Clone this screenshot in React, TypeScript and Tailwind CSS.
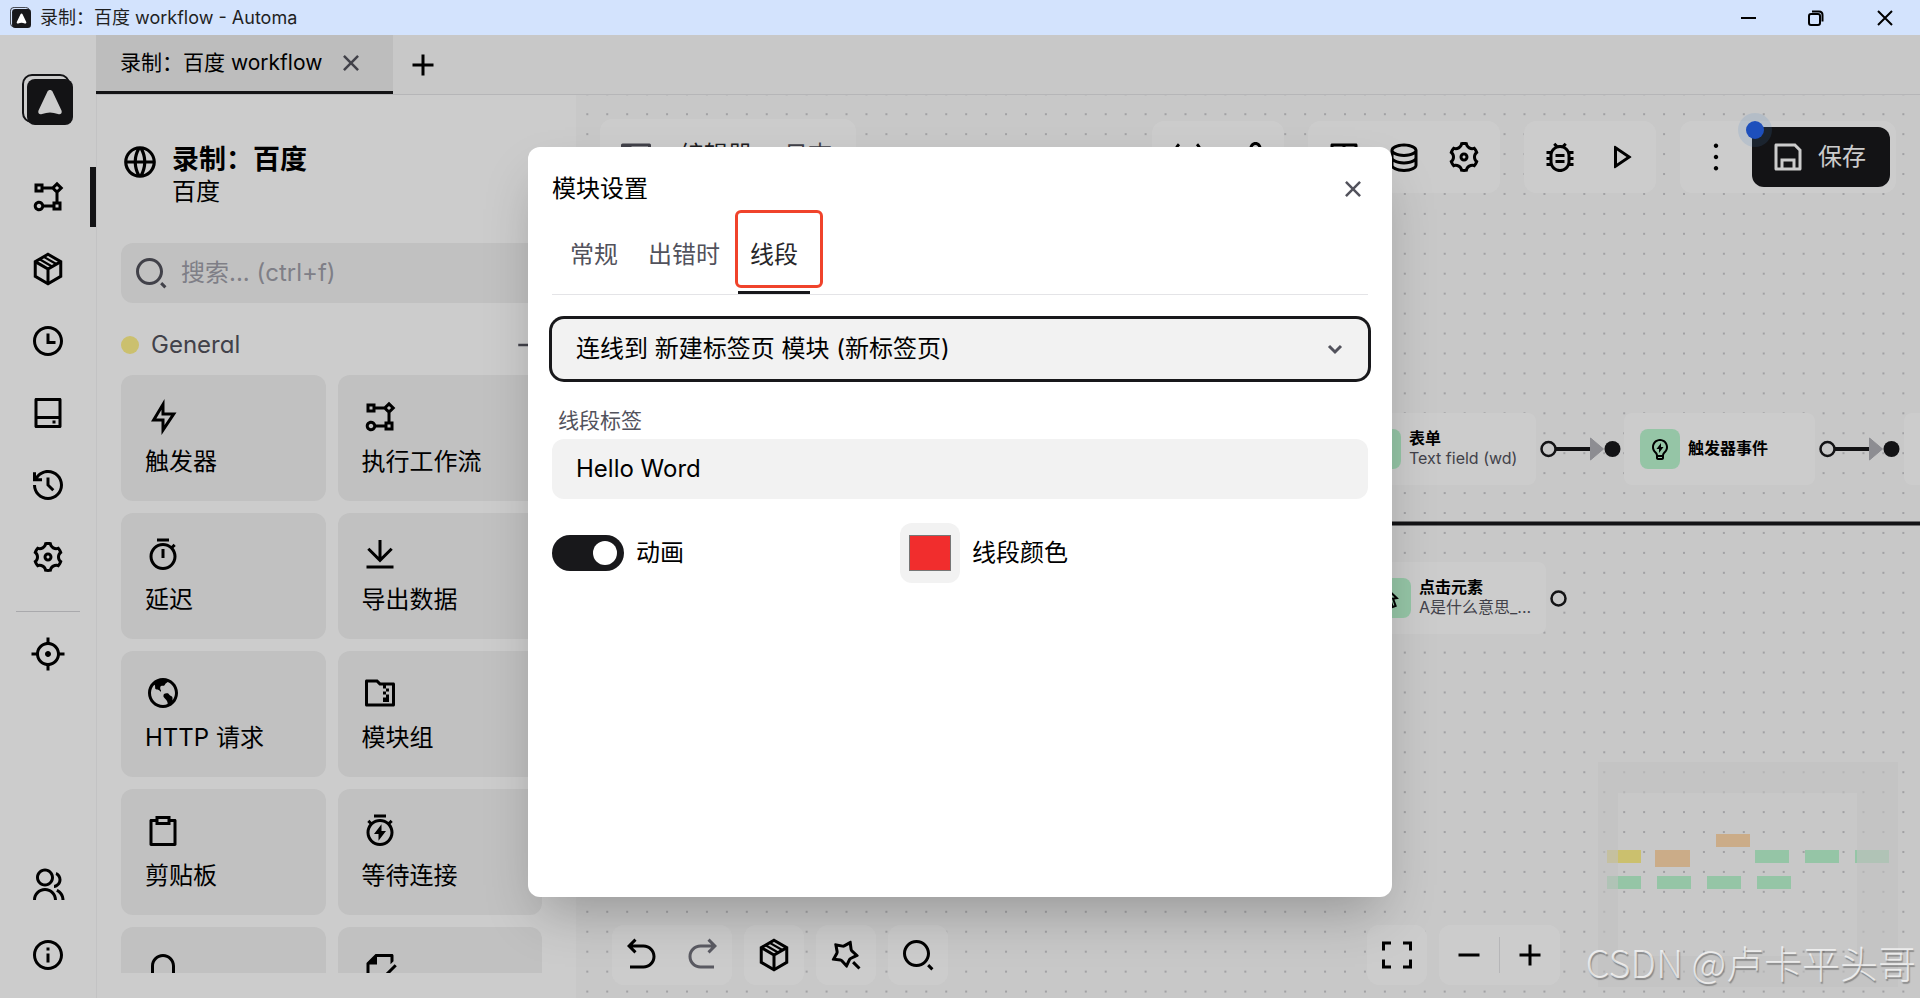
import React, { useState } from "react";
import {
  RiAddLine,
  RiArrowGoBackLine,
  RiArrowGoForwardLine,
  RiBaseStationLine,
  RiBug2Line,
  RiClipboardLine,
  RiCloseLine,
  RiCursorLine,
  RiDatabase2Line,
  RiDownloadLine,
  RiEarthLine,
  RiFileEditLine,
  RiFlashlightLine,
  RiFlowChart,
  RiFocus3Line,
  RiFolderZipLine,
  RiFullscreenLine,
  RiGlobalLine,
  RiGroupLine,
  RiHardDrive2Line,
  RiHistoryLine,
  RiInformationLine,
  RiLightbulbFlashLine,
  RiMagicLine,
  RiMore2Line,
  RiNotification3Line,
  RiPlayLine,
  RiSaveLine,
  RiSearch2Line,
  RiSettings3Line,
  RiShareLine,
  RiSubtractLine,
  RiTable2,
  RiTimeLine,
  RiTimerFlashLine,
  RiTimerLine,
} from "react-icons/ri";

type Icon = React.ComponentType<{ size?: number; className?: string }>;

interface NavItem {
  label: string;
  icon: Icon;
}

const PackageIcon: Icon = ({ size = 36 }) => (
  <svg width={size} height={size} viewBox="0 0 24 24" fill="none" stroke="currentColor" aria-hidden="true">
    <path d="M12 2.200l8.500 4.900v9.800L12 21.800l-8.500-4.900V7.100z" strokeWidth="2" />
    <path d="M3.500 7.100L12 12l8.500-4.900M12 12v9.500" strokeWidth="2" />
    <path d="M6.400 5.500l8.300 4.800M9.200 3.900l8.300 4.800" strokeWidth="1.500" />
  </svg>
);

const navItems: NavItem[] = [
  { label: "工作流", icon: RiFlowChart },
  { label: "模块包", icon: PackageIcon },
  { label: "定时", icon: RiTimeLine },
  { label: "存储", icon: RiHardDrive2Line },
  { label: "日志", icon: RiHistoryLine },
  { label: "设置", icon: RiSettings3Line },
];

const blocks: { label?: string; icon: Icon }[] = [
  { label: "触发器", icon: RiFlashlightLine },
  { label: "执行工作流", icon: RiFlowChart },
  { label: "延迟", icon: RiTimerLine },
  { label: "导出数据", icon: RiDownloadLine },
  { label: "HTTP 请求", icon: RiEarthLine },
  { label: "模块组", icon: RiFolderZipLine },
  { label: "剪贴板", icon: RiClipboardLine },
  { label: "等待连接", icon: RiTimerFlashLine },
  { icon: RiNotification3Line },
  { icon: RiFileEditLine },
];

const miniNodes = [
  { x: 9, y: 88, w: 34, h: 13, fill: "#fef08a" },
  { x: 57, y: 88, w: 35, h: 17, fill: "#fed7aa" },
  { x: 118, y: 72, w: 34, h: 13, fill: "#fed7aa" },
  { x: 157, y: 88, w: 34, h: 13, fill: "#bbf7d0" },
  { x: 207, y: 88, w: 34, h: 13, fill: "#bbf7d0" },
  { x: 257, y: 88, w: 34, h: 13, fill: "#bbf7d0" },
  { x: 9, y: 114, w: 34, h: 13, fill: "#bbf7d0" },
  { x: 59, y: 114, w: 34, h: 13, fill: "#bbf7d0" },
  { x: 109, y: 114, w: 34, h: 13, fill: "#bbf7d0" },
  { x: 159, y: 114, w: 34, h: 13, fill: "#bbf7d0" },
];

const Logo: React.FC<{ className?: string }> = ({ className }) => (
  <svg viewBox="0 0 51 51" className={className} aria-hidden="true">
    <rect x="1" y="1" width="46" height="47" rx="9" fill="none" stroke="#18181b" strokeWidth="2" />
    <rect x="5" y="5" width="46" height="46" rx="8" fill="#18181b" />
    <path
      d="M25.500 17.500c1-2 4-2 5 0l9 19c1 2.500-1 4.500-3.500 3.500-5.500-2-10.500-2-16 0-2.500 1-4.500-1-3.500-3.500z"
      fill="#fff"
    />
  </svg>
);

const TitleBar: React.FC = () => (
  <header className="flex h-[35px] shrink-0 items-center bg-[#d3e3fd] pl-[10px] text-[18px] text-[#1f1f1f] [font-feature-settings:normal]">
    <Logo className="mr-[9px] size-[21px]" />
    <span className="leading-6">录制：百度 workflow - Automa</span>
    <div className="ml-auto flex h-full">
      <button aria-label="最小化" className="flex w-[68px] items-center justify-center">
        <svg width="16" height="16" fill="none" stroke="#000" strokeWidth="2">
          <path d="M1 8h15" />
        </svg>
      </button>
      <button aria-label="还原" className="flex w-[68px] items-center justify-center">
        <svg width="16" height="16" fill="none" stroke="#000" strokeWidth="2">
          <rect x="1" y="4" width="11" height="11" rx="2" />
          <path d="M4 1.500h7c2.500 0 3.500 1.500 3.500 3.500v6.500" />
        </svg>
      </button>
      <button aria-label="关闭" className="flex w-[70px] items-center justify-center">
        <svg width="16" height="16" fill="none" stroke="#000" strokeWidth="2">
          <path d="M1 1l14 14M15 1L1 15" />
        </svg>
      </button>
    </div>
  </header>
);

const Sidebar: React.FC = () => (
  <nav className="flex w-24 shrink-0 flex-col items-center bg-white pt-9 pb-[25px]">
    <a href="#home" aria-label="Automa" className="mb-9 flex size-[60px] pt-[3px] pl-1">
      <Logo className="size-[51px]" />
    </a>
    <div className="flex w-full flex-col gap-3">
      {navItems.map(({ label, icon: Icon }, i) => (
        <a
          key={label}
          href={`#nav-${i}`}
          aria-label={label}
          className={`flex h-[60px] w-full items-center justify-center border-r-[6px] pl-[6px] ${
            i === 0 ? "border-[#18181b]" : "border-transparent"
          }`}
        >
          <Icon size={36} />
        </a>
      ))}
    </div>
    <hr className="mt-6 mb-3 w-16 border-zinc-300" />
    <button aria-label="元素选择器" className="flex size-[60px] items-center justify-center">
      <RiFocus3Line size={36} />
    </button>
    <div className="mt-auto flex flex-col gap-[34px]">
      <a href="#community" aria-label="社区">
        <RiGroupLine size={36} />
      </a>
      <a href="#about" aria-label="关于">
        <RiInformationLine size={36} />
      </a>
    </div>
  </nav>
);

const TabBar: React.FC = () => (
  <div className="flex h-[60px] shrink-0 items-stretch border-b border-zinc-200 bg-zinc-50">
    <div className="flex items-center border-b-[3px] border-[#18181b] bg-black/5 pr-[27px] pl-6">
      <a href="#tab" className="text-[21px] leading-7">
        录制：百度 workflow
      </a>
      <button aria-label="关闭标签页" className="ml-[14px] text-zinc-600">
        <RiCloseLine size={30} />
      </button>
    </div>
    <button aria-label="新建标签页" className="ml-3 flex w-9 items-center justify-center">
      <RiAddLine size={36} />
    </button>
  </div>
);

const BlockPanel: React.FC = () => (
  <aside className="flex w-[480px] shrink-0 flex-col border-l border-zinc-100 bg-white pt-12 pr-[34px] pb-[25px] pl-6">
    <div className="mb-9 flex shrink-0 gap-[13px]">
      <RiGlobalLine size={38} />
      <div>
        <h1 className="text-[27px] leading-[34px] font-bold">录制：百度</h1>
        <p className="text-[24px] leading-[30px]">百度</p>
      </div>
    </div>
    <label className="mb-6 flex h-[60px] shrink-0 items-center rounded-xl bg-[#f2f2f2] px-3 text-zinc-600">
      <RiSearch2Line size={36} className="shrink-0" />
      <input
        type="search"
        aria-label="搜索"
        placeholder="搜索... (ctrl+f)"
        className="ml-3 w-full bg-transparent text-[24px] outline-none placeholder:text-zinc-400"
      />
    </label>
    <div className="min-h-0 flex-1 overflow-hidden">
      <button className="mb-3 flex h-9 w-full items-center text-zinc-600">
        <span className="mr-3 size-[18px] rounded-full bg-[#fef08a]" />
        <span className="text-[24px] leading-9">General</span>
        <RiSubtractLine size={30} className="ml-auto" />
      </button>
      <div className="grid grid-cols-2 gap-3">
        {blocks.map(({ label, icon: Icon }, i) => (
          <div key={i} className="min-h-[126px] rounded-xl bg-[#f2f2f2] px-6 pt-6 pb-[21px]">
            <Icon size={36} className="mb-[9px]" />
            {label && <p className="text-[24px] leading-9 whitespace-nowrap">{label}</p>}
          </div>
        ))}
      </div>
    </div>
  </aside>
);

const ToolGroup: React.FC<{ items: NavItem[] }> = ({ items }) => (
  <div className="flex rounded-xl bg-white p-[6px]">
    {items.map(({ label, icon: Icon }) => (
      <button key={label} aria-label={label} className="flex size-[60px] items-center justify-center">
        <Icon size={36} />
      </button>
    ))}
  </div>
);

const Toolbar: React.FC = () => (
  <div className="relative flex items-center gap-6 p-6">
    <div className="mr-auto flex h-[76px] items-center rounded-xl bg-white pr-6 pl-[18px] text-[24px]">
      <button aria-label="切换侧边栏" className="mr-[14px] text-zinc-600">
        <svg width="36" height="36" viewBox="0 0 24 24" fill="currentColor" fillRule="evenodd">
          <path d="M3 3h18a1 1 0 0 1 1 1v16a1 1 0 0 1-1 1H3a1 1 0 0 1-1-1V4a1 1 0 0 1 1-1zm6 2v14h11V5z" />
        </svg>
      </button>
      <button className="px-3 pb-1 text-zinc-800">编辑器</button>
      <button className="pb-1 pl-5 text-zinc-600">日志</button>
    </div>
    <ToolGroup
      items={[
        { label: "托管", icon: RiBaseStationLine },
        { label: "分享", icon: RiShareLine },
      ]}
    />
    <ToolGroup
      items={[
        { label: "表格", icon: RiTable2 },
        { label: "全局数据", icon: RiDatabase2Line },
        { label: "设置", icon: RiSettings3Line },
      ]}
    />
    <ToolGroup
      items={[
        { label: "调试", icon: RiBug2Line },
        { label: "执行", icon: RiPlayLine },
      ]}
    />
    <div className="flex gap-[6px] rounded-xl bg-white p-[6px]">
      <button aria-label="更多" className="flex size-[60px] items-center justify-center">
        <RiMore2Line size={36} />
      </button>
      <button className="relative flex h-[60px] items-center gap-3 rounded-xl bg-[#18181b] pr-6 pl-[18px] text-[24px] text-white">
        <span className="absolute -top-[14px] -left-[14px] flex size-[34px] items-center justify-center rounded-full bg-[#60a5fa]/15">
          <span className="size-[18px] rounded-full bg-[#2563eb]" />
        </span>
        <RiSaveLine size={36} />
        保存
      </button>
    </div>
  </div>
);

interface FlowNodeProps {
  title?: string;
  description?: string;
  icon: Icon;
  className: string;
}

const FlowNode: React.FC<FlowNodeProps> = ({ title, description, icon: Icon, className }) => (
  <div className={`absolute flex h-[72px] w-[191px] items-center gap-2 rounded-lg bg-white pr-3 pl-4 ${className}`}>
    <span className="flex size-10 shrink-0 items-center justify-center rounded-lg bg-[#bbf7d0]">
      <Icon size={24} />
    </span>
    <div className="min-w-0 pb-[2px] text-[16px] leading-5 whitespace-nowrap">
      {title && <p className="font-semibold">{title}</p>}
      {description && <p className="text-zinc-600">{description}</p>}
    </div>
  </div>
);

// edges and handles, in canvas coordinates
const Edges: React.FC = () => (
  <svg className="absolute inset-0 size-full" aria-hidden="true">
    <defs>
      <pattern id="dots" x="10.300" y="18.200" width="19.940" height="19.940" patternUnits="userSpaceOnUse">
        <circle cx="1" cy="1" r="0.750" fill="#81818a" />
      </pattern>
    </defs>
    <rect width="100%" height="100%" fill="url(#dots)" />
    <path d="M700 428.500H1400" stroke="#18181b" strokeWidth="4" />
    {[972.5, 1251.5].map((x) => (
      <g key={x}>
        <path d={`M${x + 7} 354h38`} stroke="#18181b" strokeWidth="4" />
        <path d={`M${x + 42} 343v22l13-11z`} fill="#b1b1b7" stroke="#b1b1b7" strokeLinejoin="round" />
        <circle cx={x} cy="354" r="7" fill="#fafafa" stroke="#18181b" strokeWidth="2.500" />
        <circle cx={x + 64} cy="354" r="8" fill="#18181b" />
      </g>
    ))}
    <circle cx="982.500" cy="503.500" r="7" fill="#fafafa" stroke="#18181b" strokeWidth="2.500" />
  </svg>
);

const MiniMap: React.FC = () => (
  <svg width="300" height="225" className="absolute right-[22px] bottom-[11px]" aria-hidden="true">
    {miniNodes.map((n) => (
      <rect key={`${n.x}-${n.y}`} x={n.x} y={n.y} width={n.w} height={n.h} fill={n.fill} />
    ))}
    <path
      d="M0 0h300v225H0zM20 31v163h239V31z"
      fill="#f1f1f1"
      fillOpacity="0.600"
      fillRule="evenodd"
    />
  </svg>
);

const controlClass = "flex size-[60px] items-center justify-center rounded-xl bg-white";

const Canvas: React.FC = () => (
  <main className="relative min-w-0 flex-1 overflow-hidden bg-zinc-50">
    <Edges />
    <FlowNode
      title="表单"
      description="Text field (wd)"
      icon={RiCursorLine}
      className="top-[318px] left-[769px]"
    />
    <FlowNode title="触发器事件" icon={RiLightbulbFlashLine} className="top-[318px] left-[1048px]" />
    <FlowNode icon={RiCursorLine} className="top-[318px] left-[1328px]" />
    <FlowNode
      title="点击元素"
      description="A是什么意思_..."
      icon={RiCursorLine}
      className="top-[467px] left-[779px]"
    />
    <Toolbar />
    <MiniMap />
    <div className="absolute bottom-[13px] left-9 flex gap-3">
      <div className="flex rounded-xl bg-white">
        <button aria-label="撤销" className={controlClass}>
          <RiArrowGoBackLine size={36} />
        </button>
        <button aria-label="重做" disabled className={`${controlClass} text-zinc-500`}>
          <RiArrowGoForwardLine size={36} />
        </button>
      </div>
      <button aria-label="模块包" className={controlClass}>
        <PackageIcon size={36} />
      </button>
      <button aria-label="自动对齐" className={controlClass}>
        <RiMagicLine size={36} />
      </button>
      <button aria-label="搜索模块" className={controlClass}>
        <RiSearch2Line size={36} />
      </button>
    </div>
    <div className="absolute right-[360px] bottom-[13px] flex gap-3">
      <button aria-label="全屏" className={controlClass}>
        <RiFullscreenLine size={36} />
      </button>
      <div className="flex items-center rounded-xl bg-white">
        <button aria-label="缩小" className={controlClass}>
          <RiSubtractLine size={36} />
        </button>
        <hr className="h-9 w-px border-0 bg-zinc-200" />
        <button aria-label="放大" className={controlClass}>
          <RiAddLine size={36} />
        </button>
      </div>
    </div>
  </main>
);

const tabs = ["常规", "出错时", "线段"];

const BlockSettingsModal: React.FC = () => {
  const [activeTab, setActiveTab] = useState("线段");
  const [label, setLabel] = useState("Hello Word");
  const [animated, setAnimated] = useState(true);
  const [color, setColor] = useState("#f12d2d");

  return (
    <div
      role="dialog"
      aria-label="模块设置"
      className="relative min-h-[750px] w-full max-w-[864px] rounded-xl bg-white p-6 text-[24px] leading-9 shadow-2xl"
    >
      <div className="mb-3 flex items-center justify-between">
        <h2>模块设置</h2>
        <button aria-label="关闭" className="text-zinc-600">
          <RiCloseLine size={30} />
        </button>
      </div>
      <div role="tablist" className="mb-6 flex gap-[6px] border-b border-zinc-200 px-[6px]">
        {tabs.map((tab) => (
          <button
            key={tab}
            role="tab"
            aria-selected={tab === activeTab}
            onClick={() => setActiveTab(tab)}
            className={`relative border-b-[3px] px-3 py-[18px] ${
              tab === activeTab ? "border-[#18181b] text-zinc-800" : "border-transparent text-zinc-600"
            }`}
          >
            {tab}
            {tab === "线段" && (
              <span className="absolute -top-[9px] -left-[3px] h-[78px] w-[88px] rounded-md border-[3px] border-[#f0432b]" />
            )}
          </button>
        ))}
      </div>
      <div className="relative mb-6">
        <select
          aria-label="连线"
          className="h-[60px] w-full appearance-none rounded-xl bg-[#f2f2f2] px-6 ring-3 ring-[#18181b] outline-none"
        >
          <option>连线到 新建标签页 模块 (新标签页)</option>
        </select>
        <svg
          width="36"
          height="36"
          fill="none"
          stroke="currentColor"
          strokeWidth="3"
          className="pointer-events-none absolute top-3 right-[15px] text-zinc-600"
        >
          <path d="M12 15l6 6 6-6" />
        </svg>
      </div>
      <label htmlFor="edge-label" className="block px-[6px] text-[21px] leading-9 text-zinc-600">
        线段标签
      </label>
      <input
        id="edge-label"
        type="text"
        value={label}
        onChange={(e) => setLabel(e.target.value)}
        className="mb-6 h-[60px] w-full rounded-xl bg-[#f2f2f2] px-6 pb-[2px] outline-none"
      />
      <div className="flex items-center">
        <label className="flex w-[348px] items-center gap-3">
          <input
            type="checkbox"
            checked={animated}
            onChange={(e) => setAnimated(e.target.checked)}
            className="peer sr-only"
          />
          <span className="flex h-9 w-[72px] items-center rounded-full bg-zinc-300 px-[7px] peer-checked:justify-end peer-checked:bg-[#18181b]">
            <span className="size-6 rounded-full bg-white" />
          </span>
          动画
        </label>
        <label className="flex items-center gap-3">
          <input
            type="color"
            value={color}
            onChange={(e) => setColor(e.target.value)}
            className="size-[60px] rounded-xl bg-[#f2f2f2] px-[7px] py-2"
          />
          线段颜色
        </label>
      </div>
    </div>
  );
};

const App: React.FC = () => {
  return (
    <div className="flex h-screen flex-col overflow-hidden font-[Inter,'Noto_Sans_CJK_SC',sans-serif] text-black [font-feature-settings:'cv02','cv03','cv04','cv11']">
      <TitleBar />
      <div className="relative flex min-h-0 flex-1">
        <Sidebar />
        <div className="flex min-w-0 flex-1 flex-col">
          <TabBar />
          <div className="flex min-h-0 flex-1">
            <BlockPanel />
            <Canvas />
          </div>
        </div>
        <div className="absolute inset-0 flex items-start justify-center bg-black/20 pt-28">
          <BlockSettingsModal />
        </div>
        <p className="pointer-events-none absolute right-1 bottom-2 font-['Noto_Sans_CJK_SC',sans-serif] text-[38px] leading-[56px] font-light text-white/70 [text-shadow:1px_2px_1px_rgb(0_0_0/0.3)]">
          CSDN @卢卡平头哥
        </p>
      </div>
    </div>
  );
};

export default App;
